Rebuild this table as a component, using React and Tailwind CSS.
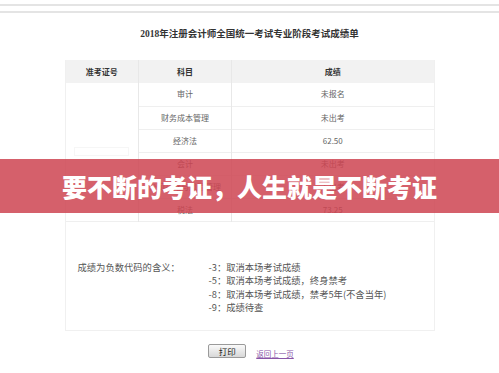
export default function App() {
  const rows = [
    ['审计', '未报名'],
    ['财务成本管理', '未出考'],
    ['经济法', '62.50'],
    ['会计', '未出考'],
    ['公司战略与风险管理', '未出考'],
    ['税法', '73.25'],
  ]
  const codes = [
    '-3：取消本场考试成绩',
    '-5：取消本场考试成绩，终身禁考',
    '-8：取消本场考试成绩，禁考5年(不含当年)',
    '-9：成绩待查',
  ]

  return (
    <div className="relative w-[499px] h-[373px] bg-white overflow-hidden" style={{ fontFamily: '"Noto Sans CJK SC", "Noto Sans", sans-serif' }}>
      {/* top rules */}
      <div className="pt-[4px]">
        <div className="h-[2px] bg-[#e4e4e4]" />
        <div className="h-[2px] bg-[#e4e4e4] mt-[5px]" />
      </div>

      <h1 className="mt-[15px] text-center text-[9.5px] leading-[12px] font-bold text-[#333]" style={{ fontFamily: '"Liberation Serif", "Noto Sans CJK SC", serif' }}>
        2018年注册会计师全国统一考试专业阶段考试成绩单
      </h1>

      {/* score box */}
      <div className="mx-auto mt-[20px] w-[370px] h-[271px] border border-[#f0f0f0] border-t-0">
        <table className="w-full border-collapse text-[8px] text-[#666]">
          <thead>
            <tr className="h-[23px] bg-[#f2f2f2] text-[#333]">
              <th className="w-[73px] border-r border-[#e8e8e8] font-bold">准考证号</th>
              <th className="w-[93px] border-r border-[#e8e8e8] font-bold">科目</th>
              <th className="font-bold">成绩</th>
            </tr>
          </thead>
          <tbody>
            {rows.map((r, i) => (
              <tr key={i} className="h-[23px] border-b border-[#efefef]">
                {i === 0 && (
                  <td rowSpan={6} className="border-r border-[#e8e8e8] align-top">
                    <div className="mx-auto w-[55px] h-[9px] border border-[#f6f6f6] mt-[64px]" />
                  </td>
                )}
                <td className="text-center border-r border-[#e8e8e8]">{r[0]}</td>
                <td className="text-center">{r[1]}</td>
              </tr>
            ))}
          </tbody>
        </table>

        <div className="mt-[39px] flex text-[9.3px] leading-[13.6px] text-[#555]">
          <div className="w-[143px] pl-[12px]">成绩为负数代码的含义：</div>
          <div>
            {codes.map((c, i) => (
              <div key={i}>{c}</div>
            ))}
          </div>
        </div>
      </div>

      {/* actions */}
      <div className="mt-[12px] flex items-center justify-center gap-[10px] pl-[3px]">
        <button className="w-[38px] h-[14px] rounded-[2px] border border-[#9a9a9a] bg-gradient-to-b from-[#fafafa] to-[#d8d8d8] text-[8.5px] leading-[12px] text-[#222]">
          打印
        </button>
        <a className="mt-[6px] text-[7.5px] leading-[10px] text-[#8a55a8] underline">返回上一页</a>
      </div>

      {/* caption banner over the picture */}
      <div className="absolute left-0 top-[159px] w-full h-[54px] bg-[rgba(206,68,81,0.85)] flex items-center justify-center">
        <span className="text-white text-[25px] font-black leading-none">要不断的考证，人生就是不断考证</span>
      </div>
    </div>
  )
}
